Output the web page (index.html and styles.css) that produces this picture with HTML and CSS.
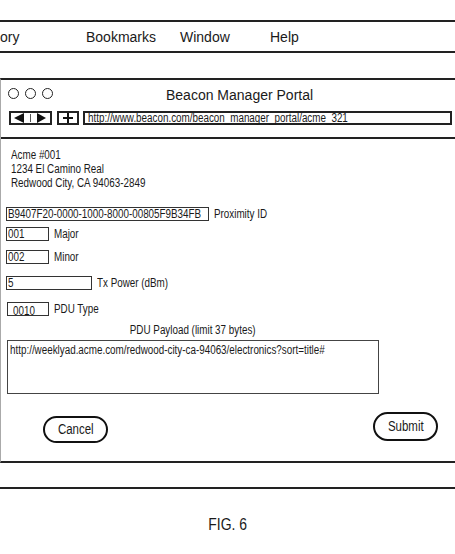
FILE: index.html
```html
<!DOCTYPE html>
<html>
<head>
<meta charset="utf-8">
<link rel="stylesheet" href="styles.css">
</head>
<body>
<div class="menubar">
  <span>ory</span><span>Bookmarks</span><span>Window</span><span>Help</span>
</div>
<div class="window">
  <div class="titlebar">
    <div class="lights"><span class="light"></span><span class="light"></span><span class="light"></span></div>
    <div class="title">Beacon Manager Portal</div>
  </div>
  <div class="toolbar">
    <div class="tbtn nav">
      <svg width="39" height="10" viewBox="0 0 39 10"><polygon points="3,5 13,0 13,10" fill="#111"/><line x1="19.5" y1="1" x2="19.5" y2="9" stroke="#555" stroke-width="1"/><polygon points="26,0 26,10 35,5" fill="#111"/></svg>
    </div>
    <div class="tbtn plus">
      <svg width="18" height="10" viewBox="0 0 18 10"><line x1="4" y1="5" x2="14" y2="5" stroke="#111" stroke-width="2"/><line x1="9" y1="0" x2="9" y2="10" stroke="#111" stroke-width="2"/></svg>
    </div>
    <div class="url"><span class="nx">http://www.beacon.com/beacon_manager_portal/acme_321</span></div>
  </div>
  <div class="content">
    <div class="address"><span class="nx">Acme #001<br>1234 El Camino Real<br>Redwood City, CA 94063-2849</span></div>
    <div class="field row-uuid"><div class="box w-uuid"><span class="nx">B9407F20-0000-1000-8000-00805F9B34FB</span></div><span class="label nx">Proximity ID</span></div>
    <div class="field row-major"><div class="box w-small"><span class="nx">001</span></div><span class="label nx">Major</span></div>
    <div class="field row-minor"><div class="box w-small"><span class="nx">002</span></div><span class="label nx">Minor</span></div>
    <div class="field row-tx"><div class="box w-tx"><span class="nx">5</span></div><span class="label nx">Tx Power (dBm)</span></div>
    <div class="field row-pdu"><div class="box w-pdu"><span class="nx">0010</span></div><span class="label nx">PDU Type</span></div>
    <div class="payload-label"><span class="nx nc">PDU Payload (limit 37 bytes)</span></div>
    <div class="payload"><span class="nx">http://weeklyad.acme.com/redwood-city-ca-94063/electronics?sort=title#</span></div>
    <div class="actions">
      <div class="btn cancel"><span class="nx nc">Cancel</span></div>
      <div class="btn submit"><span class="nx nc">Submit</span></div>
    </div>
  </div>
</div>
<div class="dock"></div>
<div class="fig"><span class="nx nc">FIG. 6</span></div>
</body>
</html>
```
FILE: styles.css
```css
html, body {
  margin: 0;
  padding: 0;
  background: #fff;
}
body {
  width: 455px;
  overflow: hidden;
  font-family: "Liberation Sans", Arial, sans-serif;
  color: #1a1a1a;
}
.nx {
  display: inline-block;
  white-space: nowrap;
  transform: scaleX(0.82);
  transform-origin: 0 50%;
}
.nc {
  transform-origin: 50% 50%;
}
.menubar {
  margin-top: 20px;
  height: 29px;
  border-top: 2px solid #222;
  border-bottom: 2px solid #222;
  display: grid;
  grid-template-columns: 86px 94px 90px auto;
  align-items: center;
  font-size: 14px;
}
.window {
  margin-top: 25px;
  border-top: 2px solid #222;
  border-bottom: 2px solid #222;
  border-left: 1px solid #aaa;
}
.titlebar {
  height: 26px;
  display: flex;
  align-items: flex-start;
}
.lights {
  display: flex;
  gap: 6px;
  margin-top: 8px;
  margin-left: 7px;
}
.light {
  width: 11px;
  height: 11px;
  box-sizing: border-box;
  border: 1px solid #222;
  border-radius: 50%;
}
.title {
  margin-left: 113px;
  margin-top: 7px;
  font-size: 14px;
  line-height: 16px;
}
.toolbar {
  display: flex;
  align-items: flex-start;
  padding: 5px 0 12px 8px;
  border-bottom: 2px solid #222;
}
.tbtn {
  height: 14px;
  box-sizing: border-box;
  border: 2px solid #222;
  display: flex;
}
.nav { width: 43px; }
.plus { width: 22px; margin-left: 5px; }
.url {
  margin-left: 4px;
  width: 369px;
  height: 14px;
  box-sizing: border-box;
  border: 2px solid #222;
  padding-left: 3px;
  font-size: 12px;
  line-height: 10px;
  white-space: nowrap;
}
.content {
  padding: 9px 0 18px 5px;
  font-size: 12px;
}
.address {
  padding-left: 5px;
  line-height: 14px;
}
.field {
  display: flex;
  align-items: center;
}
.row-uuid { margin-top: 17px; }
.row-major { margin-top: 6px; }
.row-minor { margin-top: 9px; }
.row-tx { margin-top: 12px; }
.row-pdu { margin-top: 12px; }
.box {
  height: 14px;
  box-sizing: border-box;
  border: 1px solid #333;
  padding-left: 1px;
  line-height: 12px;
  white-space: nowrap;
}
.w-uuid { width: 203px; }
.w-small { width: 43px; }
.w-tx { width: 86px; }
.w-pdu { width: 42px; margin-left: 1px; padding-left: 5px; padding-top: 2px; }
.label {
  margin-left: 5px;
  line-height: 14px;
}
.payload-label {
  margin-top: 7px;
  width: 373px;
  text-align: center;
  line-height: 14px;
}
.payload {
  margin-top: 3px;
  margin-left: 1px;
  width: 372px;
  height: 54px;
  box-sizing: border-box;
  border: 1px solid #444;
  padding: 2px 0 0 2px;
  line-height: 14px;
  white-space: nowrap;
}
.actions {
  margin-top: 18px;
  display: flex;
  align-items: flex-start;
  padding-right: 17px;
}
.btn {
  width: 65px;
  box-sizing: border-box;
  border: 2px solid #111;
  border-radius: 15px;
  text-align: center;
  font-size: 14px;
}
.cancel {
  margin-left: 37px;
  margin-top: 4px;
  height: 27px;
  line-height: 23px;
}
.submit {
  margin-left: auto;
  height: 29px;
  line-height: 25px;
}
.dock {
  height: 24px;
  border-bottom: 2px solid #222;
}
.fig {
  margin-top: 26px;
  text-align: center;
  font-size: 17px;
  line-height: 20px;
}
```
